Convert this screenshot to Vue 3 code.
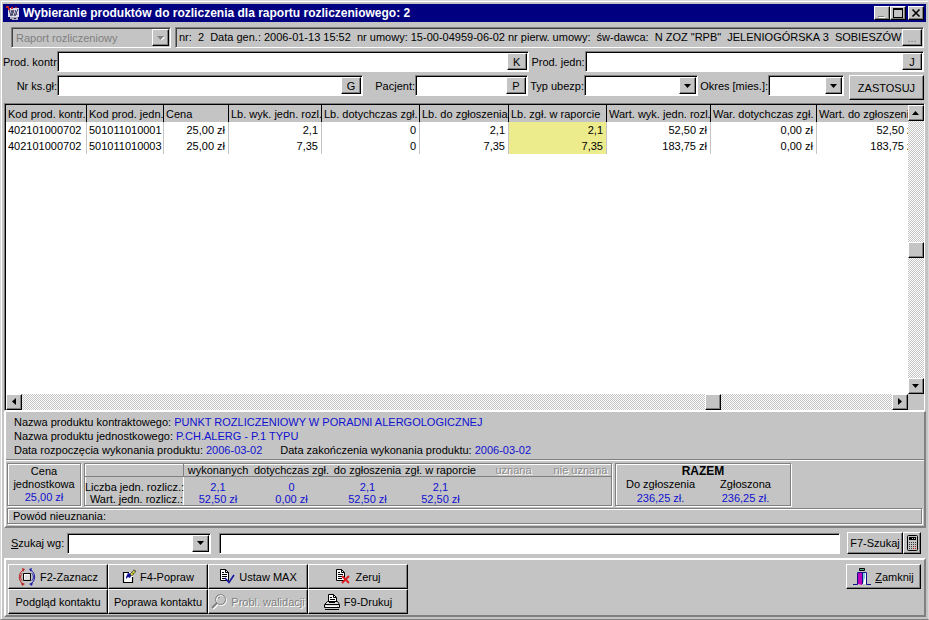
<script setup>
import { ref } from 'vue'

const reportType = ref('Raport rozliczeniowy')
const reportInfo = 'nr:  2  Data gen.: 2006-01-13 15:52  nr umowy: 15-00-04959-06-02 nr pierw. umowy:  św-dawca:  N ZOZ "RPB"  JELENIOGÓRSKA 3  SOBIESZÓW'
const columns = [
  { label: 'Kod prod. kontr.', width: 81 },
  { label: 'Kod prod. jedn.', width: 77 },
  { label: 'Cena', width: 65 },
  { label: 'Lb. wyk. jedn. rozl.', width: 93 },
  { label: 'Lb. dotychczas zgł.', width: 98 },
  { label: 'Lb. do zgłoszenia', width: 89 },
  { label: 'Lb. zgł. w raporcie', width: 98 },
  { label: 'Wart. wyk. jedn. rozl.', width: 104 },
  { label: 'War. dotychczas zgł.', width: 106 },
  { label: 'Wart. do zgłoszenia', width: 102 },
]
const rows = [
  ['402101000702', '501011010001', '25,00 zł', '2,1', '0', '2,1', '2,1', '52,50 zł', '0,00 zł', '52,50 zł'],
  ['402101000702', '501011010003', '25,00 zł', '7,35', '0', '7,35', '7,35', '183,75 zł', '0,00 zł', '183,75 zł'],
]
const summaryHead = ['wykonanych', 'dotychczas zgł.', 'do zgłoszenia', 'zgł. w raporcie']
const summaryRows = [
  { label: 'Liczba jedn. rozlicz.:', values: ['2,1', '0', '2,1', '2,1', '', ''] },
  { label: 'Wart. jedn. rozlicz.:', values: ['52,50 zł', '0,00 zł', '52,50 zł', '52,50 zł', '', ''] },
]
</script>

<template>
  <main class="window">
    <header class="titlebar">
      <svg class="app-icon" viewBox="0 0 14 14" aria-hidden="true">
        <path d="M2 2h11v9H2z" fill="#dde" />
        <path d="M3 3l2 7 2-6 2 6 3-7M5 4l2 6M9 4l2 5" fill="none" stroke="#446" />
        <path d="M0 0h3v2H0zM2 2h2v2H2zM5 1h2v2H5zM9 1h2v1H9z" fill="#c22" />
        <path d="M4 11h8v3H4z" fill="#aab" /><path d="M3 13h3v1H3zM8 12h2v1H8z" fill="#224" />
      </svg>
      <h1>Wybieranie produktów do rozliczenia dla raportu rozliczeniowego: 2</h1>
      <div class="win-buttons">
        <button type="button" aria-label="Minimalizuj">
          <svg viewBox="0 0 10 10"><path d="M2 9h6v1H2z" fill="#fff" /><path d="M1 8h6v1H1z" fill="#808080" /></svg>
        </button>
        <button type="button" aria-label="Maksymalizuj">
          <svg viewBox="0 0 10 10"><path d="M0 0h10v10H0zM1 2v7h8V2z" fill="#000" fill-rule="evenodd" /></svg>
        </button>
        <button type="button" class="close" aria-label="Zamknij okno">
          <svg viewBox="0 0 10 10"><path d="M1.500 1.500l7 7M8.500 1.500l-7 7" stroke="#000" stroke-width="1.600" /></svg>
        </button>
      </div>
    </header>

    <section class="filters">
      <div class="row-report">
        <div class="field combo disabled">
          <select v-model="reportType" disabled aria-label="Rodzaj raportu"><option>Raport rozliczeniowy</option></select>
          <span class="arrow"><svg viewBox="0 0 7 4"><path d="M1 1h7L4.500 4.500z" fill="#fff" /><path d="M0 0h7L3.500 4z" fill="#808080" /></svg></span>
        </div>
        <div class="field info">
          <span class="report-info">{{ reportInfo }}</span>
          <button type="button" class="pick dots" aria-label="Szczegóły">...</button>
        </div>
      </div>
      <div class="row-products">
        <label for="kontr">Prod. kontr:</label>
        <div class="field"><input id="kontr" type="text" /><button type="button" class="pick">K</button></div>
        <label for="jedn">Prod. jedn:</label>
        <div class="field"><input id="jedn" type="text" /><button type="button" class="pick">J</button></div>
      </div>
      <div class="row-more">
        <label for="ksiega">Nr ks.gł:</label>
        <div class="field"><input id="ksiega" type="text" /><button type="button" class="pick">G</button></div>
        <label for="pacjent">Pacjent:</label>
        <div class="field"><input id="pacjent" type="text" /><button type="button" class="pick">P</button></div>
        <label for="ubezp">Typ ubezp:</label>
        <div class="field combo">
          <select id="ubezp"><option></option></select>
          <span class="arrow"><svg viewBox="0 0 7 4"><path d="M0 0h7L3.500 4z" /></svg></span>
        </div>
        <label for="okres">Okres [mies.]:</label>
        <div class="field combo">
          <select id="okres"><option></option></select>
          <span class="arrow"><svg viewBox="0 0 7 4"><path d="M0 0h7L3.500 4z" /></svg></span>
        </div>
        <button type="button" class="btn apply">ZASTOSUJ</button>
      </div>
    </section>

    <section class="grid-box">
      <div class="grid-main">
        <div class="grid-view">
          <table class="grid">
            <colgroup><col v-for="c in columns" :key="c.label" :style="{ width: c.width + 'px' }" /></colgroup>
            <thead>
              <tr><th v-for="c in columns" :key="c.label" scope="col">{{ c.label }}</th></tr>
            </thead>
            <tbody>
              <tr v-for="(r, i) in rows" :key="i">
                <td v-for="(v, j) in r" :key="j" :class="{ code: j < 2, marked: j === 6 }">{{ v }}</td>
              </tr>
            </tbody>
          </table>
        </div>
        <div class="vbar">
          <button type="button" class="sb" aria-label="W górę"><svg viewBox="0 0 8 8"><path d="M0 6h7L3.500 2z" /></svg></button>
          <span class="space"></span><span class="thumb"></span><span class="space"></span>
          <button type="button" class="sb" aria-label="W dół"><svg viewBox="0 0 8 8"><path d="M0 2h7L3.500 6z" /></svg></button>
        </div>
      </div>
      <div class="hbar">
        <button type="button" class="sb" aria-label="W lewo"><svg viewBox="0 0 8 8"><path d="M6 0v7L2 3.500z" /></svg></button>
        <span class="space before"></span><span class="thumb"></span><span class="space"></span>
        <button type="button" class="sb" aria-label="W prawo"><svg viewBox="0 0 8 8"><path d="M2 0v7L6 3.500z" /></svg></button>
      </div>
    </section>

    <section class="details">
      <div class="names">
        <p>Nazwa produktu kontraktowego: <b>PUNKT ROZLICZENIOWY W PORADNI ALERGOLOGICZNEJ</b></p>
        <p>Nazwa produktu jednostkowego: <b>P.CH.ALERG - P.1 TYPU</b></p>
        <p class="dates">
          <span>Data rozpoczęcia wykonania produktu: <b>2006-03-02</b></span>
          <span>Data zakończenia wykonania produktu: <b>2006-03-02</b></span>
        </p>
      </div>
      <div class="boxes">
        <div class="groove price"><span>Cena</span><span>jednostkowa</span><b>25,00 zł</b></div>
        <div class="groove">
          <table class="summary">
            <colgroup><col class="c-label" /><col class="c-first" /><col class="c-second" /><col class="c-mid" /><col class="c-mid" /><col class="c-mid" /><col class="c-last" /></colgroup>
            <thead>
              <tr>
                <td></td>
                <th v-for="h in summaryHead" :key="h" scope="col">{{ h }}</th>
                <th scope="col" class="off">uznana</th>
                <th scope="col" class="off">nie uznana</th>
              </tr>
            </thead>
            <tbody>
              <tr v-for="r in summaryRows" :key="r.label">
                <th scope="row">{{ r.label }}</th>
                <td v-for="(v, i) in r.values" :key="i">{{ v }}</td>
              </tr>
            </tbody>
          </table>
        </div>
        <div class="groove total">
          <strong>RAZEM</strong>
          <span>Do zgłoszenia</span><span>Zgłoszona</span>
          <b>236,25 zł.</b><b>236,25 zł.</b>
        </div>
      </div>
      <div class="groove reason">Powód nieuznania:</div>
    </section>

    <section class="search">
      <label for="by"><u>S</u>zukaj wg:</label>
      <div class="field combo by">
        <select id="by"><option></option></select>
        <span class="arrow"><svg viewBox="0 0 7 4"><path d="M0 0h7L3.500 4z" /></svg></span>
      </div>
      <div class="field query"><input type="text" aria-label="Szukany tekst" /></div>
      <div class="search-buttons">
        <button type="button" class="btn find">F7-Szukaj</button>
        <button type="button" class="btn calc" aria-label="Kalkulator">
          <svg class="i-calc" viewBox="0 0 11 16">
            <rect x=".5" y=".5" width="10" height="15" rx="1" fill="#c4c4c4" stroke="#000" />
            <path d="M2 2h7v3H2z" />
            <path d="M5 3h1v1H5zM7 3h1v1H7z" fill="#ccc" />
            <path d="M2 7h1v1H2zM4 7h1v1H4zM6 7h1v1H6zM8 7h1v1H8zM2 9h1v1H2zM4 9h1v1H4zM6 9h1v1H6zM8 9h1v1H8zM2 11h1v1H2zM4 11h1v1H4zM6 11h1v1H6zM2 13h1v1H2zM4 13h1v1H4z" fill="#333" />
            <path d="M8 11h1v1H8zM6 13h1v1H6zM8 13h1v1H8z" fill="#b00" />
          </svg>
        </button>
      </div>
    </section>

    <footer class="actions">
      <div class="action-grid">
        <button type="button" class="btn">
          <svg class="i-mark" viewBox="0 0 18 18">
            <path d="M5.500 2C0 4.500 0 13 5 16M4.500 5C2 7 2 11 4.500 13" fill="none" stroke="#b22" />
            <path d="M12.500 2c5.500 2.500 5.500 11.500 0 14M13.500 5c2.500 2 2.500 6 0 8" fill="none" stroke="#22a" />
            <path d="M4 0l3 1-2 3zM3 14l4 2-3 2z" fill="#b22" /><path d="M14 0l-3 1 2 3zM15 14l-4 2 3 2z" fill="#22a" />
            <path d="M5.500 5.500h7v7h-7z" fill="#ddd" stroke="#000" /><path d="M6 6h5v1H7v4H6z" fill="#fff" />
          </svg>F2-Zaznacz</button>
        <button type="button" class="btn">
          <svg class="i-edit" viewBox="0 0 14 15">
            <path d="M1 3h7l3 4v7H1z" fill="#fff" /><path d="M7 3.500H1.500v10h9V8" fill="none" stroke="#000" stroke-width="1.200" />
            <path d="M4 8l2-4 4 1-2 4-2-1-2 2z" fill="#11119a" /><path d="M8 5l4-4 2 1-4 5z" fill="#dd3" stroke="#333" stroke-width=".6" /><path d="M9 3l3 2M11 1l3 2" stroke="#333" stroke-width=".7" />
          </svg>F4-Popraw</button>
        <button type="button" class="btn">
          <svg class="i-doc" viewBox="0 0 16 15">
            <path d="M1.500.5h5l3 3v8h-8z" fill="#fff" stroke="#000" /><path d="M6.500.5v3h3M3 3.500h2M3 5.500h5M3 7.500h5M3 9.500h4" fill="none" stroke="#000" />
            <path d="M6 9l4 4.500L15 6" fill="none" stroke="#1515a0" stroke-width="1.600" />
          </svg>Ustaw MAX</button>
        <button type="button" class="btn">
          <svg class="i-doc" viewBox="0 0 16 15">
            <path d="M1.500.5h5l3 3v8h-8z" fill="#fff" stroke="#000" /><path d="M6.500.5v3h3M3 3.500h2M3 5.500h5M3 7.500h5M3 9.500h4" fill="none" stroke="#000" />
            <path d="M7 7l7 7M14 7l-7 7" fill="none" stroke="#e01818" stroke-width="1.800" />
          </svg>Zeruj</button>
        <button type="button" class="btn">Podgląd kontaktu</button>
        <button type="button" class="btn">Poprawa kontaktu</button>
        <button type="button" class="btn" disabled>
          <svg class="i-lens" viewBox="0 0 16 15">
            <g fill="none" stroke="#fff"><circle cx="10.500" cy="6.500" r="5" /><path d="M7 10l-5 5" stroke-width="2" /></g>
            <g fill="none" stroke="#808080"><circle cx="9.500" cy="5.500" r="5" /><path d="M6 9l-5 5" stroke-width="2" /><path d="M7 4l2-1" /></g>
          </svg>Probl. walidacji</button>
        <button type="button" class="btn">
          <svg class="i-print" viewBox="0 0 16 16">
            <path d="M4.500 7.500v-7h5l3 3v4" fill="#fff" stroke="#000" /><path d="M9.500.5v3h3M6 3.500h2M6 5.500h5" fill="none" stroke="#000" />
            <path d="M3.500 7.500h10l2 3v3H.5v-3z" fill="#ddd" stroke="#000" /><path d="M1 10.500h14M1 15.500h14M5 8.500h6" stroke="#000" /><path d="M2 12.500h11" stroke="#fff" />
          </svg>F9-Drukuj</button>
      </div>
      <button type="button" class="btn exit">
        <svg class="i-door" viewBox="0 0 18 18">
          <path d="M6.500.5h5v2h-5z" fill="#5a8" stroke="#000" />
          <path d="M4 4h10v12H4z" fill="#fff" /><path d="M5 4h4v13l-4-1z" fill="#b0b" /><path d="M9 5h2v9l-2 2zM11 5h1v6h-1z" fill="#7cd" />
          <path d="M0 16.500h4.500V4.500h9v12H18M9.500 5v11" fill="none" stroke="#118" />
        </svg><span><u>Z</u>amknij</span></button>
    </footer>
  </main>
</template>

<style>
body { margin: 0; background: #c4c4c4; }
</style>

<style scoped>
* { box-sizing: border-box; }
.window {
  min-height: 100vh;
  display: flex;
  flex-direction: column;
  padding: 1px 2px 2px 2px;
  background: #c4c4c4;
  border: 1px solid #d8d8d8;
  border-bottom-color: #808080;
  box-shadow: inset 1px 1px #fff;
  font: 11px/14px "Liberation Sans", Arial, sans-serif;
  color: #000;
}
button, input, select { font: inherit; color: inherit; margin: 0; padding: 0; border-radius: 0; }
svg { display: block; flex: none; overflow: visible; }
p, h1 { margin: 0; }
b { font-weight: normal; color: #1010d0; }

.titlebar { display: flex; align-items: center; height: 18px; margin-top: 2px; padding: 0 2px 0 3px; background: #000080; color: #fff; }
.app-icon { width: 14px; height: 14px; margin-right: 3px; }
.titlebar h1 { flex: 1; font-size: 12px; font-weight: bold; white-space: nowrap; overflow: hidden; }
.win-buttons { display: flex; }
.win-buttons button { width: 16px; height: 14px; display: flex; align-items: center; justify-content: center; }
.win-buttons svg { width: 10px; height: 10px; }
.win-buttons .close { margin-left: 2px; }
.win-buttons button, .sb, .pick, .arrow, .thumb {
  background: #c4c4c4;
  border: 1px solid;
  border-color: #fff #000 #000 #fff;
  box-shadow: inset -1px -1px #808080;
}

.filters { display: flex; flex-direction: column; gap: 3px; padding: 5px 2px 0 0; }
.row-report { display: flex; gap: 4px; padding-left: 8px; }
.row-report .combo { width: 160px; }
.row-report .info { flex: 1; background: #c4c4c4; }
.report-info { flex: 1; min-width: 0; overflow: hidden; white-space: pre; line-height: 17px; padding-left: 2px; }
.row-products { display: grid; grid-template-columns: 54px 471fr 56px 339fr; }
.row-more { display: grid; grid-template-columns: 54px 306fr 52px 113fr 56px 114fr 70px 76fr 80px; height: 28px; }
.filters label { height: 21px; text-align: right; line-height: 22px; white-space: nowrap; }
.field { display: flex; min-width: 0; height: 21px; background: #fff; border: 1px solid; border-color: #808080 #fff #fff #808080; box-shadow: inset 1px 1px #000; padding: 1px; }
.field input { flex: 1; min-width: 0; width: 0; border: 0; background: transparent; outline: none; padding: 0 3px; }
.pick { width: 20px; line-height: 14px; text-align: center; }
.dots { color: #777; }
.combo { display: grid; grid-template-columns: 1fr 17px; }
.combo select { grid-area: 1 / 1 / 2 / 3; min-width: 0; appearance: none; border: 0; background: transparent; padding-left: 3px; outline: none; }
.arrow { grid-area: 1 / 2; display: flex; align-items: center; justify-content: center; pointer-events: none; }
.arrow svg { width: 7px; height: 4px; }
.disabled, .info { box-shadow: inset 1px 1px #404040; }
.disabled { background: #c4c4c4; }
.disabled select { color: #808080; opacity: 1; }
.btn {
  display: flex; align-items: center; justify-content: center; gap: 4px; white-space: nowrap;
  background: #c4c4c4; border: 1px solid; border-color: #fff #000 #000 #fff; box-shadow: inset -1px -1px #808080;
}
.btn:disabled { color: #808080; text-shadow: 1px 1px #fff; }
.apply { height: 25px; margin-left: 5px; }

.grid-box { flex: 1; display: flex; flex-direction: column; min-height: 180px; margin: 0 1px; border: 1px solid; border-color: #808080 #fff #fff #808080; box-shadow: inset 1px 1px #000; padding: 1px 0 0 1px; }
.grid-main { flex: 1; display: flex; background: #fff; min-height: 0; }
.grid-view { flex: 1; min-width: 0; overflow: hidden; }
.grid { table-layout: fixed; width: 913px; border-collapse: separate; border-spacing: 0; }
.grid th { height: 17px; padding: 0 0 0 2px; background: #c4c4c4; border-right: 1px solid #000; font-weight: normal; text-align: left; white-space: nowrap; }
.grid td { height: 16px; padding: 0 3px 0 2px; border-right: 1px solid #c4c4c4; text-align: right; white-space: nowrap; }
.grid td.code { text-align: left; padding-right: 0; }
.grid td.marked { background: #ecec8c; }
.vbar, .hbar { display: flex; background: repeating-conic-gradient(#fff 0 25%, #c4c4c4 0 50%) 0 0 / 2px 2px; }
.vbar { flex-direction: column; width: 16px; }
.hbar { height: 16px; margin-right: 16px; box-shadow: 16px 0 #c4c4c4; }
.space { flex: 1; }
.before { flex: 4; }
.sb, .thumb { flex: none; width: 16px; height: 16px; display: flex; align-items: center; justify-content: center; }
.sb svg { width: 8px; height: 8px; }

.details { margin: 0 0 0 1px; border: 2px solid; border-color: #fff #808080 #808080 #fff; border-top-width: 1px; }
.names { padding: 3px 8px 2px; border-bottom: 1px solid #808080; box-shadow: 0 1px #fff; white-space: nowrap; }
.dates { display: flex; gap: 18px; }
.groove { border: 1px solid #808080; box-shadow: 1px 1px #fff, inset 1px 1px #fff; }
.boxes { display: flex; gap: 3px; padding: 3px 1px 2px; }
.price { width: 74px; display: flex; flex-direction: column; align-items: center; line-height: 13px; padding-top: 1px; }
.summary { width: 526px; table-layout: fixed; border-spacing: 0; text-align: center; line-height: 12px; white-space: nowrap; }
.summary th, .summary td { padding: 0; font-weight: normal; }
.c-label { width: 99px; } .c-first { width: 68px; } .c-second { width: 79px; } .c-mid { width: 73px; } .c-last { width: 61px; }
.summary thead th, .summary thead td { border-bottom: 1px solid #808080; height: 13px; }
.summary thead td { border-right: 1px solid #808080; }
.summary tbody tr:first-child > * { padding-top: 4px; }
.summary tbody th { text-align: right; border-right: 1px solid #fff; }
.summary tbody td { color: #1010d0; }
.summary .off { color: #8c8c8c; text-shadow: 1px 1px #fff; }
.total { width: 176px; display: grid; grid-template-columns: 1fr 1fr; justify-items: center; align-content: start; padding: 1px 2px 0; line-height: 12px; row-gap: 1px; }
.total strong { grid-column: 1 / 3; font-size: 12px; }
.total b { line-height: 14px; }
.reason { margin: 0 2px 2px 1px; padding-left: 5px; line-height: 14px; }

.search { display: flex; align-items: center; height: 30px; padding: 0 5px 0 8px; }
.search label { width: 56px; white-space: nowrap; }
.by { width: 144px; margin-right: 8px; }
.query { flex: 1; margin-right: 7px; }
.search-buttons { display: flex; }
.search-buttons .btn { height: 22px; }
.find { width: 56px; }
.calc { width: 18px; }
.i-calc { width: 11px; height: 16px; }

.actions { display: flex; justify-content: space-between; align-items: flex-start; margin-left: 1px; padding: 4px 3px 1px 2px; border: 2px solid; border-color: #fff #808080 #808080 #fff; }
.action-grid { display: grid; grid-template-columns: repeat(4, 100px); grid-auto-rows: 25px; }
.exit { width: 75px; height: 25px; }
.i-mark, .i-door { width: 18px; height: 18px; }
.i-edit { width: 14px; height: 15px; }
.i-doc, .i-lens { width: 16px; height: 15px; }
.i-print { width: 16px; height: 16px; }
</style>
